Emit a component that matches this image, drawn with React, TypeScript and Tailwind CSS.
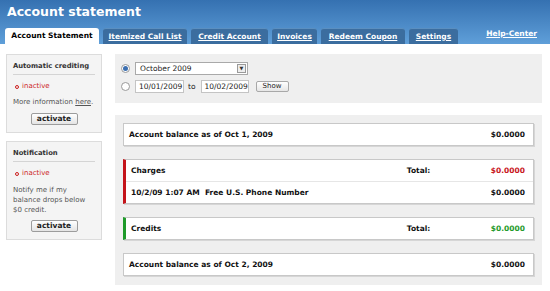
const tabs = [
  { label: 'Itemized Call List', w: 'w-[84px]' },
  { label: 'Credit Account', w: 'w-[77px]' },
  { label: 'Invoices', w: 'w-[45px]' },
  { label: 'Redeem Coupon', w: 'w-[84px]' },
  { label: 'Settings', w: 'w-[49px]' },
];

const Radio = ({ checked }: { checked?: boolean }) => (
  <span className="flex h-[9px] w-[9px] items-center justify-center rounded-full border border-[#9a9a9a] bg-white">
    {checked && <span className="h-[5px] w-[5px] rounded-full bg-[#3b6fb0]" />}
  </span>
);

const SmallButton = ({ children }: { children: string }) => (
  <button className="h-[12px] w-[47px] rounded-[2px] border border-[#9c9c9c] bg-gradient-to-b from-white to-[#e4e4e4] text-[7.5px] leading-[10px] font-bold text-[#222]">
    {children}
  </button>
);

const SideBox = ({ title, children }: { title: string; children: React.ReactNode }) => (
  <div className="border border-[#dcdcdc] bg-[#f4f4f4] px-[6px] pb-[7px]">
    <div className="border-b border-[#d4d4d4] pt-[7px] pb-[3px] text-[6.8px] leading-[9px] font-bold text-[#333]">{title}</div>
    <div className="pt-[6px] text-[7px] leading-[11px] text-[#555]">
      <div className="flex items-center gap-[3px] pl-[2px] text-[#cc1e1e]">
        <span className="h-[4px] w-[4px] rounded-full border border-[#cc1e1e]" />
        inactive
      </div>
      {children}
    </div>
  </div>
);

const Row = ({ left, mid, right, rightColor }: { left: string; mid?: string; right: string; rightColor?: string }) => (
  <div className="flex h-[21px] items-center pl-[5px] pr-[8px]">
    <span className="flex-1 whitespace-pre">{left}</span>
    {mid && <span className="w-[84px]">{mid}</span>}
    <span className={rightColor ?? 'text-[#111]'}>{right}</span>
  </div>
);

export default function App() {
  return (
    <div className="h-[291px] w-[550px] overflow-hidden bg-white text-[#111]" style={{ fontFamily: '"DejaVu Sans", Verdana, sans-serif' }}>
      <div className="h-[44px] bg-gradient-to-b from-[#3571b1] to-[#5f9fd9]">
        <div className="h-[28px] pl-[7px] pt-[3px] text-[12.5px] font-bold text-white">Account statement</div>
        <div className="flex h-[16px] items-end pl-[5px]">
          <div className="flex h-[16px] w-[94px] items-center justify-center rounded-t-[3px] bg-white text-[7.5px] font-bold text-black">
            Account Statement
          </div>
          {tabs.map(t => (
            <div key={t.label} className={`ml-[4px] flex h-[16px] items-center justify-center rounded-t-[3px] border-t border-[#5b8fc0] bg-[#3b6d9f] text-[7.5px] font-bold text-white underline ${t.w}`}>
              {t.label}
            </div>
          ))}
          <div className="ml-auto mr-[13px] self-start text-[7.5px] font-bold text-white underline">Help-Center</div>
        </div>
      </div>

      <div className="flex pt-[10px]">
        <div className="ml-[6px] flex w-[96px] flex-col gap-[8px]">
          <SideBox title="Automatic crediting">
            <div className="mt-[5px]">More information <span className="underline">here</span>.</div>
            <div className="mt-[5px] flex justify-center">
              <SmallButton>activate</SmallButton>
            </div>
          </SideBox>
          <SideBox title="Notification">
            <div className="mt-[6px] leading-[10px]">Notify me if my<br />balance drops below<br />$0 credit.</div>
            <div className="mt-[5px] flex justify-center">
              <SmallButton>activate</SmallButton>
            </div>
          </SideBox>
        </div>

        <div className="ml-[13px] flex w-[427px] flex-col gap-[12px]">
          <div className="flex h-[49px] flex-col gap-[5px] bg-[#efefef] pl-[6px] pt-[8px] text-[7.5px] text-[#222]">
            <div className="flex items-center gap-[5px]">
              <Radio checked />
              <div className="flex h-[13px] w-[113px] items-center justify-between border border-[#a9a9a9] bg-white pl-[4px] pr-[1px]">
                <span>October 2009</span>
                <span className="flex h-[9px] w-[9px] items-center justify-center border border-[#9a9a9a] bg-[#eee] text-[5px] text-[#333]">▼</span>
              </div>
            </div>
            <div className="flex items-center gap-[5px]">
              <Radio />
              <div className="flex h-[13px] w-[49px] items-center border border-[#c4c4c4] bg-white pl-[3px]">10/01/2009</div>
              <span className="-ml-[1px]">to</span>
              <div className="flex h-[13px] w-[48px] items-center border border-[#c4c4c4] bg-white pl-[3px]">10/02/2009</div>
              <button className="ml-[2px] flex h-[11px] w-[33px] items-center justify-center rounded-[2px] border border-[#a8a8a8] bg-gradient-to-b from-white to-[#e6e6e6] text-[7px]">Show</button>
            </div>
          </div>

          <div className="flex h-[170px] flex-col bg-[#efefef] px-[8px] pt-[8px] text-[7.5px] font-bold">
            <div className="border border-[#c8c8c8] bg-white shadow-[1px_1px_0_#d6d6d6]">
              <Row left="Account balance as of Oct 1, 2009" right="$0.0000" />
            </div>
            <div className="mt-[13px] border border-l-[3px] border-[#c8c8c8] border-l-[#c4141a] bg-white shadow-[1px_1px_0_#d6d6d6]">
              <Row left="Charges" mid="Total:" right="$0.0000" rightColor="text-[#c8161c]" />
              <div className="border-t border-[#e6e6e6]">
                <Row left="10/2/09 1:07 AM  Free U.S. Phone Number" right="$0.0000" />
              </div>
            </div>
            <div className="mt-[13px] border border-l-[3px] border-[#c8c8c8] border-l-[#1f9a2a] bg-white shadow-[1px_1px_0_#d6d6d6]">
              <Row left="Credits" mid="Total:" right="$0.0000" rightColor="text-[#1f9a2a]" />
            </div>
            <div className="mt-[13px] border border-[#c8c8c8] bg-white shadow-[1px_1px_0_#d6d6d6]">
              <Row left="Account balance as of Oct 2, 2009" right="$0.0000" />
            </div>
          </div>
        </div>
      </div>
    </div>
  );
}
